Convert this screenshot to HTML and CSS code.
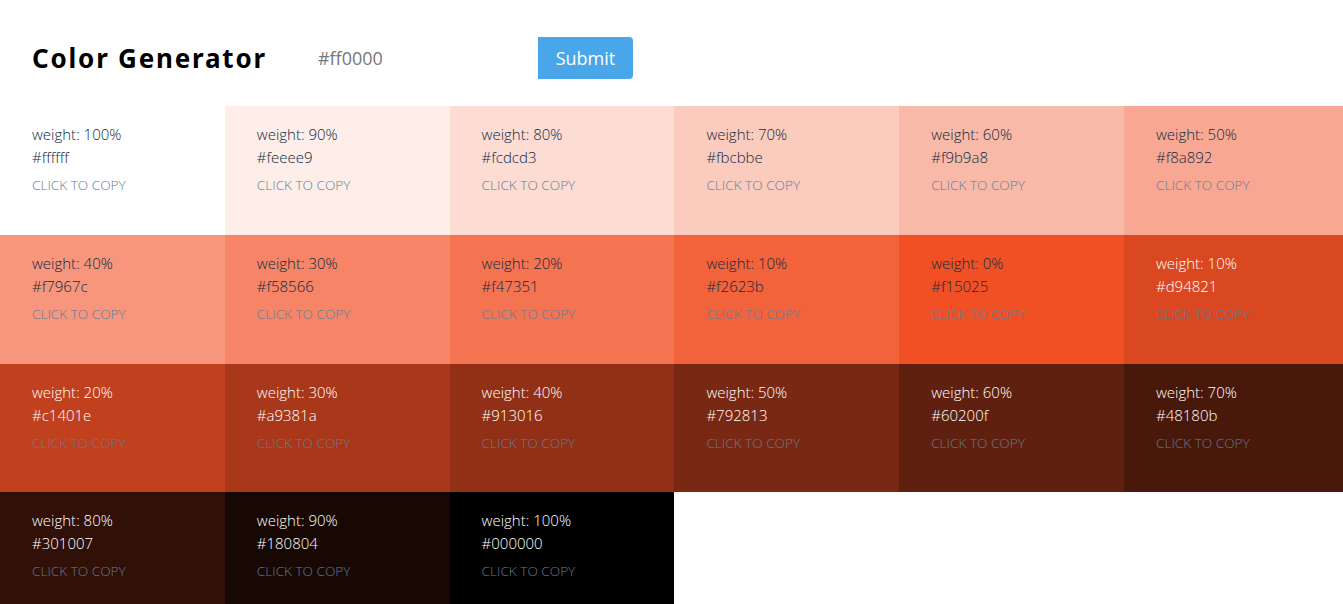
FILE: index.html
```html
<!DOCTYPE html>
<html>
<head>
<meta charset="utf-8">
<link rel="stylesheet" href="styles.css">
</head>
<body>
<section class="container">
  <h3 class="title">Color Generator</h3>
  <form class="form">
    <input class="input" type="text" placeholder="#ff0000">
    <button class="btn" type="button">Submit</button>
  </form>
</section>
<section class="colors">
  <article class="color" style="background:#ffffff"><p class="percent">weight: 100%</p><p class="hex">#ffffff</p><p class="copy">CLICK TO COPY</p></article>
  <article class="color" style="background:#feeee9"><p class="percent">weight: 90%</p><p class="hex">#feeee9</p><p class="copy">CLICK TO COPY</p></article>
  <article class="color" style="background:#fcdcd3"><p class="percent">weight: 80%</p><p class="hex">#fcdcd3</p><p class="copy">CLICK TO COPY</p></article>
  <article class="color" style="background:#fbcbbe"><p class="percent">weight: 70%</p><p class="hex">#fbcbbe</p><p class="copy">CLICK TO COPY</p></article>
  <article class="color" style="background:#f9b9a8"><p class="percent">weight: 60%</p><p class="hex">#f9b9a8</p><p class="copy">CLICK TO COPY</p></article>
  <article class="color" style="background:#f8a892"><p class="percent">weight: 50%</p><p class="hex">#f8a892</p><p class="copy">CLICK TO COPY</p></article>
  <article class="color" style="background:#f7967c"><p class="percent">weight: 40%</p><p class="hex">#f7967c</p><p class="copy">CLICK TO COPY</p></article>
  <article class="color" style="background:#f58566"><p class="percent">weight: 30%</p><p class="hex">#f58566</p><p class="copy">CLICK TO COPY</p></article>
  <article class="color" style="background:#f47351"><p class="percent">weight: 20%</p><p class="hex">#f47351</p><p class="copy">CLICK TO COPY</p></article>
  <article class="color" style="background:#f2623b"><p class="percent">weight: 10%</p><p class="hex">#f2623b</p><p class="copy">CLICK TO COPY</p></article>
  <article class="color" style="background:#f15025"><p class="percent">weight: 0%</p><p class="hex">#f15025</p><p class="copy">CLICK TO COPY</p></article>
  <article class="color light" style="background:#d94821"><p class="percent">weight: 10%</p><p class="hex">#d94821</p><p class="copy">CLICK TO COPY</p></article>
  <article class="color light" style="background:#c1401e"><p class="percent">weight: 20%</p><p class="hex">#c1401e</p><p class="copy">CLICK TO COPY</p></article>
  <article class="color light" style="background:#a9381a"><p class="percent">weight: 30%</p><p class="hex">#a9381a</p><p class="copy">CLICK TO COPY</p></article>
  <article class="color light" style="background:#913016"><p class="percent">weight: 40%</p><p class="hex">#913016</p><p class="copy">CLICK TO COPY</p></article>
  <article class="color light" style="background:#792813"><p class="percent">weight: 50%</p><p class="hex">#792813</p><p class="copy">CLICK TO COPY</p></article>
  <article class="color light" style="background:#60200f"><p class="percent">weight: 60%</p><p class="hex">#60200f</p><p class="copy">CLICK TO COPY</p></article>
  <article class="color light" style="background:#48180b"><p class="percent">weight: 70%</p><p class="hex">#48180b</p><p class="copy">CLICK TO COPY</p></article>
  <article class="color light" style="background:#301007"><p class="percent">weight: 80%</p><p class="hex">#301007</p><p class="copy">CLICK TO COPY</p></article>
  <article class="color light" style="background:#180804"><p class="percent">weight: 90%</p><p class="hex">#180804</p><p class="copy">CLICK TO COPY</p></article>
  <article class="color light" style="background:#000000"><p class="percent">weight: 100%</p><p class="hex">#000000</p><p class="copy">CLICK TO COPY</p></article>
</section>
</body>
</html>
```
FILE: styles.css
```css
* { box-sizing: border-box; margin: 0; padding: 0; }
html, body { overflow-x: hidden; }
body {
  font-family: "Open Sans", "Noto Sans", sans-serif;
  color: #102a42;
  background: #fff;
}
.container {
  display: flex;
  align-items: center;
  height: 106px;
  padding: 9px 32px 0;
}
.title {
  font-family: "Noto Sans", "Open Sans", sans-serif;
  font-size: 26px;
  font-weight: 700;
  letter-spacing: 1.8px;
  color: #000;
  margin-right: 39px;
}
.form { display: flex; align-items: center; }
.input {
  width: 232px;
  height: 42px;
  border: none;
  outline: none;
  padding: 0 12px;
  font-family: "Open Sans", sans-serif;
  font-size: 18px;
  color: #333;
}
.input::placeholder { color: #777; }
.btn {
  width: 95px;
  height: 42px;
  border: none;
  background: #49a6e9;
  color: #fff;
  font-family: "Open Sans", sans-serif;
  font-size: 18px;
  border-radius: 0 4px 4px 0;
}
.colors {
  display: grid;
  grid-template-columns: repeat(6, 224.8px);
  grid-auto-rows: 128.8px;
}
.color {
  padding: 17px 32px;
  font-weight: 300;
}
.percent, .hex {
  font-size: 15px;
  line-height: 23px;
  color: #102a42;
}
.copy {
  margin-top: 4px;
  font-size: 13.6px;
  line-height: 23px;
  color: #617d98;
}
.light .percent, .light .hex { color: #fff; }
```
